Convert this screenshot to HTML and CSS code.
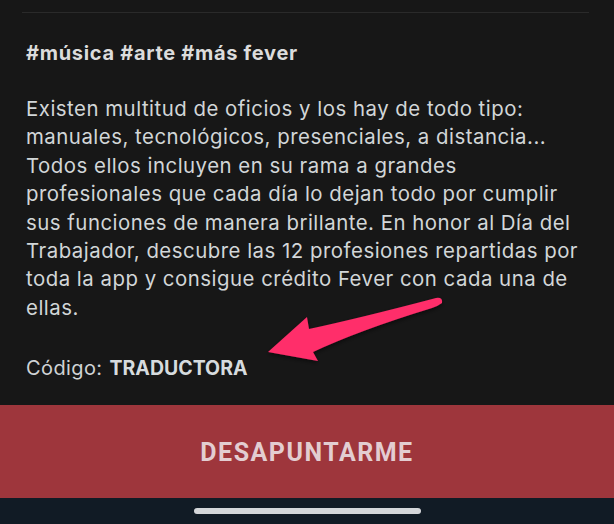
FILE: index.html
```html
<!DOCTYPE html>
<html lang="es">
<head>
<meta charset="utf-8">
<title>Fever</title>
<link rel="stylesheet" href="styles.css">
</head>
<body>
<div class="screen">
  <main class="content">
    <div class="divider"></div>
    <p class="tags">#música #arte #más fever</p>
    <p class="desc">Existen multitud de oficios y los hay de todo tipo:<br>manuales, tecnológicos, presenciales, a distancia...<br>Todos ellos incluyen en su rama a grandes<br>profesionales que cada día lo dejan todo por cumplir<br>sus funciones de manera brillante. En honor al Día del<br>Trabajador, descubre las 12 profesiones repartidas por<br>toda la app y consigue crédito Fever con cada una de<br>ellas.</p>
    <p class="code">Código: <strong>TRADUCTORA</strong></p>
  </main>
  <button class="cta">DESAPUNTARME</button>
  <div class="homebar"><span class="indicator"></span></div>
  <svg class="arrow" viewBox="0 0 614 524" width="614" height="524" aria-hidden="true">
    <defs>
      <filter id="sh" x="-20%" y="-20%" width="140%" height="140%">
        <feDropShadow dx="0" dy="2" stdDeviation="2" flood-color="#000" flood-opacity="0.5"/>
      </filter>
    </defs>
    <path filter="url(#sh)" fill="#ff2d6b" d="M268,352 L307,317 L309,329 Q360,318 436,298 Q443,297 442,303 Q438,306 432,308 Q360,330 313,352 L318,361 Z"/>
  </svg>
</div>
</body>
</html>
```
FILE: styles.css
```css
* { box-sizing: border-box; }
html, body { margin: 0; padding: 0; background: #171717; }
.screen {
  position: relative;
  width: 614px;
  height: 524px;
  display: flex;
  flex-direction: column;
  overflow: hidden;
}
.content {
  flex: 1;
  padding: 12px 26px 0;
}
.divider {
  height: 1px;
  background: #2a2a2a;
  margin: 0 -1px 0 -4px;
}
.tags {
  margin: 28px 0 0;
  font-family: Inter, "Noto Sans", sans-serif;
  font-weight: 700;
  font-size: 20px;
  line-height: 24px;
  letter-spacing: 0.7px;
  color: #dcdcdc;
}
.desc {
  margin: 30px 0 0;
  font-family: Inter, "Noto Sans", sans-serif;
  font-size: 20.4px;
  line-height: 28.4px;
  letter-spacing: 0.5px;
  white-space: nowrap;
  color: #d2d6d8;
}
.code {
  margin: 34px 0 0;
  font-family: Inter, "Noto Sans", sans-serif;
  font-size: 20px;
  line-height: 24px;
  letter-spacing: 0.4px;
  word-spacing: 1px;
  color: #cfd3d5;
}
.code strong {
  font-weight: 700;
  font-size: 19.5px;
  letter-spacing: 0;
  color: #d6dbde;
}
.cta {
  height: 93px;
  flex: none;
  border: 0;
  margin: 0;
  background: #9e363c;
  color: #e3cdd1;
  font-family: Roboto, "Liberation Sans", sans-serif;
  font-weight: 700;
  font-size: 25px;
  letter-spacing: 1.5px;
  padding: 2px 0 0;
}
.homebar {
  height: 26px;
  flex: none;
  background: #111b25;
  display: flex;
  justify-content: center;
  padding-top: 10px;
}
.indicator {
  width: 227px;
  height: 6px;
  border-radius: 3px;
  background: #d4d6d9;
}
.arrow {
  position: absolute;
  left: 0;
  top: 0;
  pointer-events: none;
}
```
